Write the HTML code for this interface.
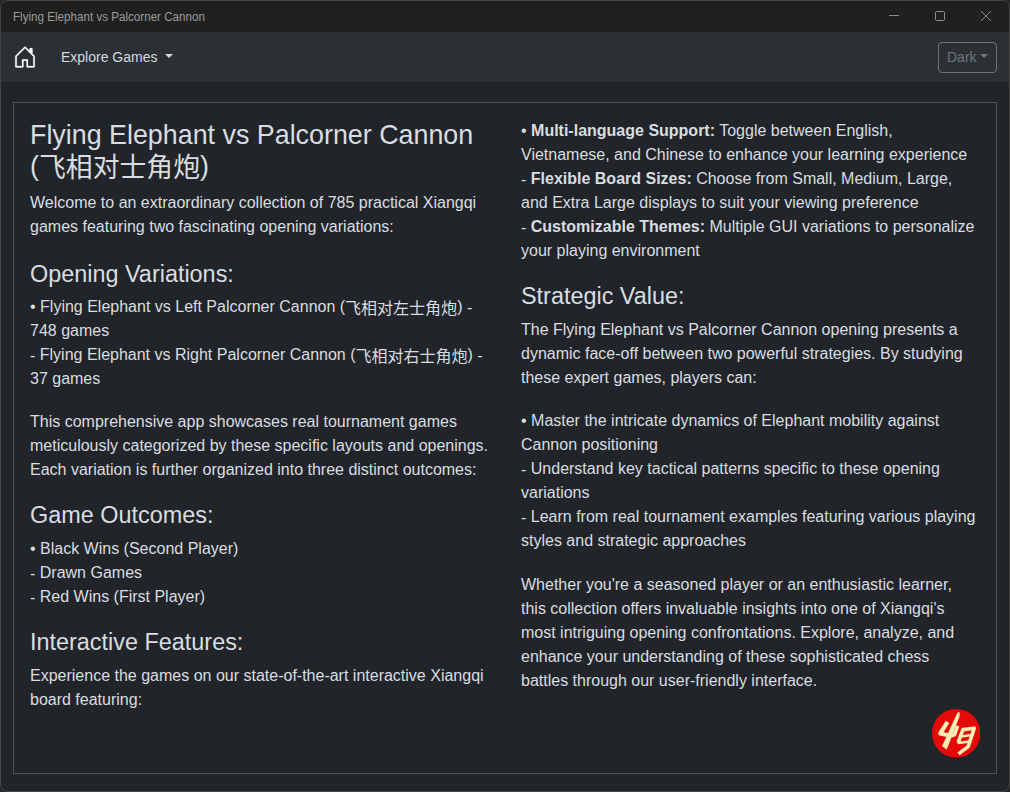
<!DOCTYPE html>
<html lang="en">
<head>
<meta charset="utf-8">
<title>Flying Elephant vs Palcorner Cannon</title>
<style>
*{box-sizing:border-box;}
html,body{margin:0;padding:0;}
body{width:1010px;height:792px;overflow:hidden;background:#262626;font-family:"Liberation Sans","Noto Sans CJK SC",sans-serif;font-size:16px;line-height:24px;color:#d9dde1;}
#win{position:absolute;left:0;top:0;width:1010px;height:792px;background:#212529;border:1px solid #454545;border-radius:8px;overflow:hidden;}
#titlebar{position:absolute;left:0;top:0;width:1008px;height:31px;background:#202020;}
#titlebar .t{position:absolute;left:12.4px;top:0px;line-height:32px;font-size:12.2px;color:#9a9a9a;white-space:nowrap;transform:scaleX(0.954);transform-origin:0 50%;}
#titlebar svg{position:absolute;top:0;}
#nav{position:absolute;left:0;top:31px;width:1008px;height:50px;background:#2b3035;}
#home{position:absolute;left:12px;top:13px;width:24px;height:24px;fill:#fff;stroke:#fff;stroke-width:.15;stroke-linejoin:round;}
#explore{position:absolute;left:60px;top:13px;font-size:14px;line-height:24px;color:#d6d9dc;white-space:nowrap;}
.caret{display:inline-block;width:0;height:0;margin-left:.255em;vertical-align:.255em;border-top:.3em solid currentColor;border-left:.3em solid transparent;border-right:.3em solid transparent;}
#dark{position:absolute;left:937px;top:10px;width:59px;height:31px;border:1px solid #6c757d;border-radius:4px;color:#6c757d;font-size:14px;line-height:29px;padding-left:8px;white-space:nowrap;}
#card{position:absolute;left:12px;top:101px;width:984px;height:672px;border:1px solid #50545a;}
.col{position:absolute;top:16px;width:459px;}
#c1{left:16px;}
#c2{left:507px;}
h3{font-size:26.85px;line-height:31.4px;font-weight:400;margin:0 0 8.8px 0;padding-top:0.8px;}
h4{font-size:23.42px;line-height:28.1px;font-weight:400;margin:0 0 7.8px 0;}
p{margin:0 0 19.2px 0;}
b{font-weight:700;}
.cj{position:relative;top:1.4px;}
h3 .cj{top:2px;}
.hy{position:relative;top:1px;}
#logo{position:absolute;left:917.7px;top:605.8px;width:48.5px;height:48.5px;}
</style>
</head>
<body>
<div id="win">
  <div id="titlebar">
    <div class="t">Flying Elephant vs Palcorner Cannon</div>
    <svg style="left:871px" width="138" height="31" viewBox="0 0 138 31" fill="none" stroke="#8c8c8c" stroke-width="1">
      <line x1="17" y1="14.5" x2="27" y2="14.5"/>
      <rect x="63.5" y="10.5" width="9" height="9" rx="1"/>
      <line x1="109" y1="10" x2="119" y2="20"/><line x1="119" y1="10" x2="109" y2="20"/>
    </svg>
  </div>
  <div id="nav">
    <svg id="home" viewBox="0 0 16 16"><path d="M8.354 1.146a.5.5 0 0 0-.708 0l-6 6A.5.5 0 0 0 1.500 7.500v7a.5.5 0 0 0 .5.5h4.500a.5.5 0 0 0 .5-.5v-4h2v4a.5.5 0 0 0 .5.5H14a.5.5 0 0 0 .5-.5v-7a.5.5 0 0 0-.146-.354L13 5.793V2.500a.5.5 0 0 0-.5-.5h-1a.5.5 0 0 0-.5.5v1.293zM2.500 14V7.707l5.500-5.500 5.500 5.500V14H10v-4a.5.5 0 0 0-.5-.5h-3a.5.5 0 0 0-.5.5v4z"/></svg>
    <div id="explore">Explore Games <span class="caret"></span></div>
    <div id="dark">Dark<span class="caret"></span></div>
  </div>
  <div id="card">
    <div class="col" id="c1">
      <h3>Flying Elephant vs Palcorner Cannon (<span class="cj">飞相对士角炮</span>)</h3>
      <p style="margin-bottom:20.2px">Welcome to an extraordinary collection of 785 practical Xiangqi games featuring two fascinating opening variations:</p>
      <h4>Opening Variations:</h4>
      <p style="margin-bottom:18.2px">• Flying Elephant vs Left Palcorner Cannon (<span class="cj">飞相对左士角炮</span>) <span class="hy">-</span> 748 games<br><span class="hy">-</span> Flying Elephant vs Right Palcorner Cannon (<span class="cj">飞相对右士角炮</span>) <span class="hy">-</span> 37 games</p>
      <p>This comprehensive app showcases real tournament games meticulously categorized by these specific layouts and openings. Each variation is further organized into three distinct outcomes:</p>
      <h4>Game Outcomes:</h4>
      <p>• Black Wins (Second Player)<br><span class="hy">-</span> Drawn Games<br><span class="hy">-</span> Red Wins (First Player)</p>
      <h4>Interactive Features:</h4>
      <p>Experience the games on our state-of-the-art interactive Xiangqi board featuring:</p>
    </div>
    <div class="col" id="c2">
      <p>• <b>Multi-language Support:</b> Toggle between English, Vietnamese, and Chinese to enhance your learning experience<br><span class="hy">-</span> <b>Flexible Board Sizes:</b> Choose from Small, Medium, Large, and Extra Large displays to suit your viewing preference<br><span class="hy">-</span> <b>Customizable Themes:</b> Multiple GUI variations to personalize your playing environment</p>
      <h4>Strategic Value:</h4>
      <p>The Flying Elephant vs Palcorner Cannon opening presents a dynamic face-off between two powerful strategies. By studying these expert games, players can:</p>
      <p style="margin-bottom:20.1px">• Master the intricate dynamics of Elephant mobility against Cannon positioning<br><span class="hy">-</span> Understand key tactical patterns specific to these opening variations<br><span class="hy">-</span> Learn from real tournament examples featuring various playing styles and strategic approaches</p>
      <p>Whether you're a seasoned player or an enthusiastic learner, this collection offers invaluable insights into one of Xiangqi's most intriguing opening confrontations. Explore, analyze, and enhance your understanding of these sophisticated chess battles through our user-friendly interface.</p>
    </div>
    <svg id="logo" viewBox="0 0 48 48">
      <circle cx="24" cy="24" r="24" fill="#e50a0a"/>
      <g fill="none" stroke="#ffecb3" stroke-width="4.2" stroke-linecap="butt" stroke-linejoin="round">
        <polygon points="27.4,3.2 25.6,3.2 24.2,5.6 9.9,36.8 14.6,40.2 27.2,7.4" fill="#ffecb3" stroke="none"/>
        <polyline points="15.4,12.8 8.2,24.2 17.5,26.2"/>
        <polyline points="18.6,26.8 22.2,25.6 25.4,16.8" stroke-width="3.6"/>
        <polyline points="25.8,33.4 30.6,20.4 41.8,19.0 35.8,37.2 26.2,44.4" stroke-width="3.6"/>
        <line x1="28.4" y1="27.2" x2="40" y2="25.8" stroke-width="2.6"/>
        <line x1="25.4" y1="33.6" x2="37.6" y2="32.2" stroke-width="2.6"/>
      </g>
    </svg>
  </div>
</div>
</body>
</html>
